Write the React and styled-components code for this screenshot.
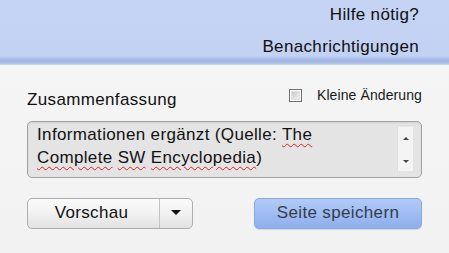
import React from "react";
import styled, { createGlobalStyle } from "styled-components";

const Global = createGlobalStyle`
  html, body { margin: 0; padding: 0; background: #f3f3f3; }
  body { font-family: "Liberation Sans", Arial, sans-serif; color: #111; }
  #root { width: 449px; height: 253px; overflow: hidden; }
`;

const Page = styled.div`
  width: 449px;
  height: 253px;
  display: flex;
  flex-direction: column;
  background: linear-gradient(to bottom, #f6f6f6 0, #f2f2f2 100%);
`;

const Header = styled.header`
  height: 65px;
  box-sizing: border-box;
  padding: 5px 30px 0 0;
  display: flex;
  flex-direction: column;
  align-items: flex-end;
  gap: 12px;
  background: linear-gradient(
    to bottom,
    #c5d3f4 0,
    #c3d2f3 56px,
    #a7bdeb 59px,
    #9fb6e8 61px,
    #b5c5e6 64px,
    #dfe3ea 65px
  );
`;

const HeaderLink = styled.span`
  font-size: 17px;
  line-height: 20px;
  letter-spacing: 0.35px;
  color: #101010;
`;

const Body = styled.main`
  flex: 1;
  padding: 24px 27px 0 27px;
  display: flex;
  flex-direction: column;
`;

const TopRow = styled.div`
  display: flex;
  justify-content: space-between;
  align-items: flex-start;
  height: 22px;
`;

const Title = styled.label`
  margin-top: 1px;
  font-size: 17px;
  line-height: 20px;
  letter-spacing: 0.35px;
  color: #111;
`;

const MinorEdit = styled.label`
  display: flex;
  align-items: flex-start;
  gap: 15px;
`;

const Box = styled.span`
  width: 13px;
  height: 13px;
  box-sizing: border-box;
  border: 1px solid #6f6f6f;
  background: #fff;
  display: flex;
  align-items: center;
  justify-content: center;

  &::after {
    content: "";
    width: 9px;
    height: 9px;
    background: linear-gradient(135deg, #c9c9c9 0, #f2f2f2 100%);
    border: 1px solid #e2e2e2;
    box-sizing: border-box;
  }
`;

const SmallText = styled.span`
  margin-top: -1px;
  font-size: 14px;
  line-height: 14px;
  letter-spacing: 0.1px;
  color: #1a1a1a;
`;

const Summary = styled.div`
  margin-top: 10px;
  height: 57px;
  box-sizing: border-box;
  border: 1px solid #a2a2a2;
  border-radius: 5px;
  background: #e4e4e4;
  box-shadow: inset 0 1px 2px rgba(0, 0, 0, 0.08);
  display: flex;
`;

const SummaryText = styled.div`
  flex: 1;
  padding: 1px 0 0 9px;
  font-size: 17px;
  line-height: 23px;
  letter-spacing: 0.35px;
  color: #111;
`;

const Misspelled = styled.span`
  text-decoration: underline wavy #e02020;
  text-decoration-thickness: 1px;
  text-underline-offset: 3px;
`;

const Scrollbar = styled.div`
  width: 16px;
  margin: 5px 8px 6px 0;
  background: #f4f4f4;
  border-left: 1px solid #dcdcdc;
  display: flex;
  flex-direction: column;
  align-items: center;
  justify-content: space-between;
  padding: 10px 0 8px;
  box-sizing: border-box;
`;

const Arrow = styled.span`
  width: 0;
  height: 0;
  border-left: 3px solid transparent;
  border-right: 3px solid transparent;
  ${(p) =>
    p.$up
      ? "border-bottom: 3px solid #444;"
      : "border-top: 3px solid #444;"}
`;

const Actions = styled.div`
  margin-top: 20px;
  display: flex;
  justify-content: space-between;
  align-items: center;
`;

const SplitButton = styled.div`
  width: 166px;
  height: 31px;
  box-sizing: border-box;
  border: 1px solid #adadad;
  border-radius: 5px;
  background: linear-gradient(to bottom, #fbfbfb 0, #f1f1f1 50%, #e2e2e2 100%);
  display: flex;
  overflow: hidden;
`;

const Part = styled.button`
  border: 0;
  margin: 0;
  background: transparent;
  font-family: "Liberation Sans", Arial, sans-serif;
  font-size: 17px;
  letter-spacing: 0.35px;
  color: #111;
  padding: 0 0 1px;
  display: flex;
  align-items: center;
  justify-content: center;
  ${(p) =>
    p.$main
      ? "width: 132px; border-right: 1px solid #c2c2c2; padding-right: 4px;"
      : "flex: 1;"}
`;

const Caret = styled.span`
  width: 0;
  height: 0;
  border-left: 5px solid transparent;
  border-right: 5px solid transparent;
  border-top: 5px solid #111;
  margin-top: -1px;
`;

const SaveButton = styled.button`
  width: 168px;
  height: 31px;
  box-sizing: border-box;
  border: 1px solid #8ca8df;
  border-radius: 5px;
  background: linear-gradient(to bottom, #b2caf6 0, #a0bcf2 50%, #8eafee 100%);
  box-shadow: 0 1px 1px rgba(120, 140, 180, 0.25);
  font-family: "Liberation Sans", Arial, sans-serif;
  font-size: 17px;
  letter-spacing: 0.35px;
  color: #363c4a;
  padding: 0 0 1px;
`;

export default function App() {
  return (
    <>
      <Global />
      <Page>
        <Header>
          <HeaderLink>Hilfe nötig?</HeaderLink>
          <HeaderLink>Benachrichtigungen</HeaderLink>
        </Header>
        <Body>
          <TopRow>
            <Title>Zusammenfassung</Title>
            <MinorEdit>
              <Box />
              <SmallText>Kleine Änderung</SmallText>
            </MinorEdit>
          </TopRow>
          <Summary>
            <SummaryText>
              Informationen ergänzt (Quelle: <Misspelled>The</Misspelled>
              <br />
              <Misspelled>Complete</Misspelled> <Misspelled>SW</Misspelled>{" "}
              <Misspelled>Encyclopedia</Misspelled>)
            </SummaryText>
            <Scrollbar>
              <Arrow $up />
              <Arrow />
            </Scrollbar>
          </Summary>
          <Actions>
            <SplitButton>
              <Part $main>Vorschau</Part>
              <Part>
                <Caret />
              </Part>
            </SplitButton>
            <SaveButton>Seite speichern</SaveButton>
          </Actions>
        </Body>
      </Page>
    </>
  );
}
